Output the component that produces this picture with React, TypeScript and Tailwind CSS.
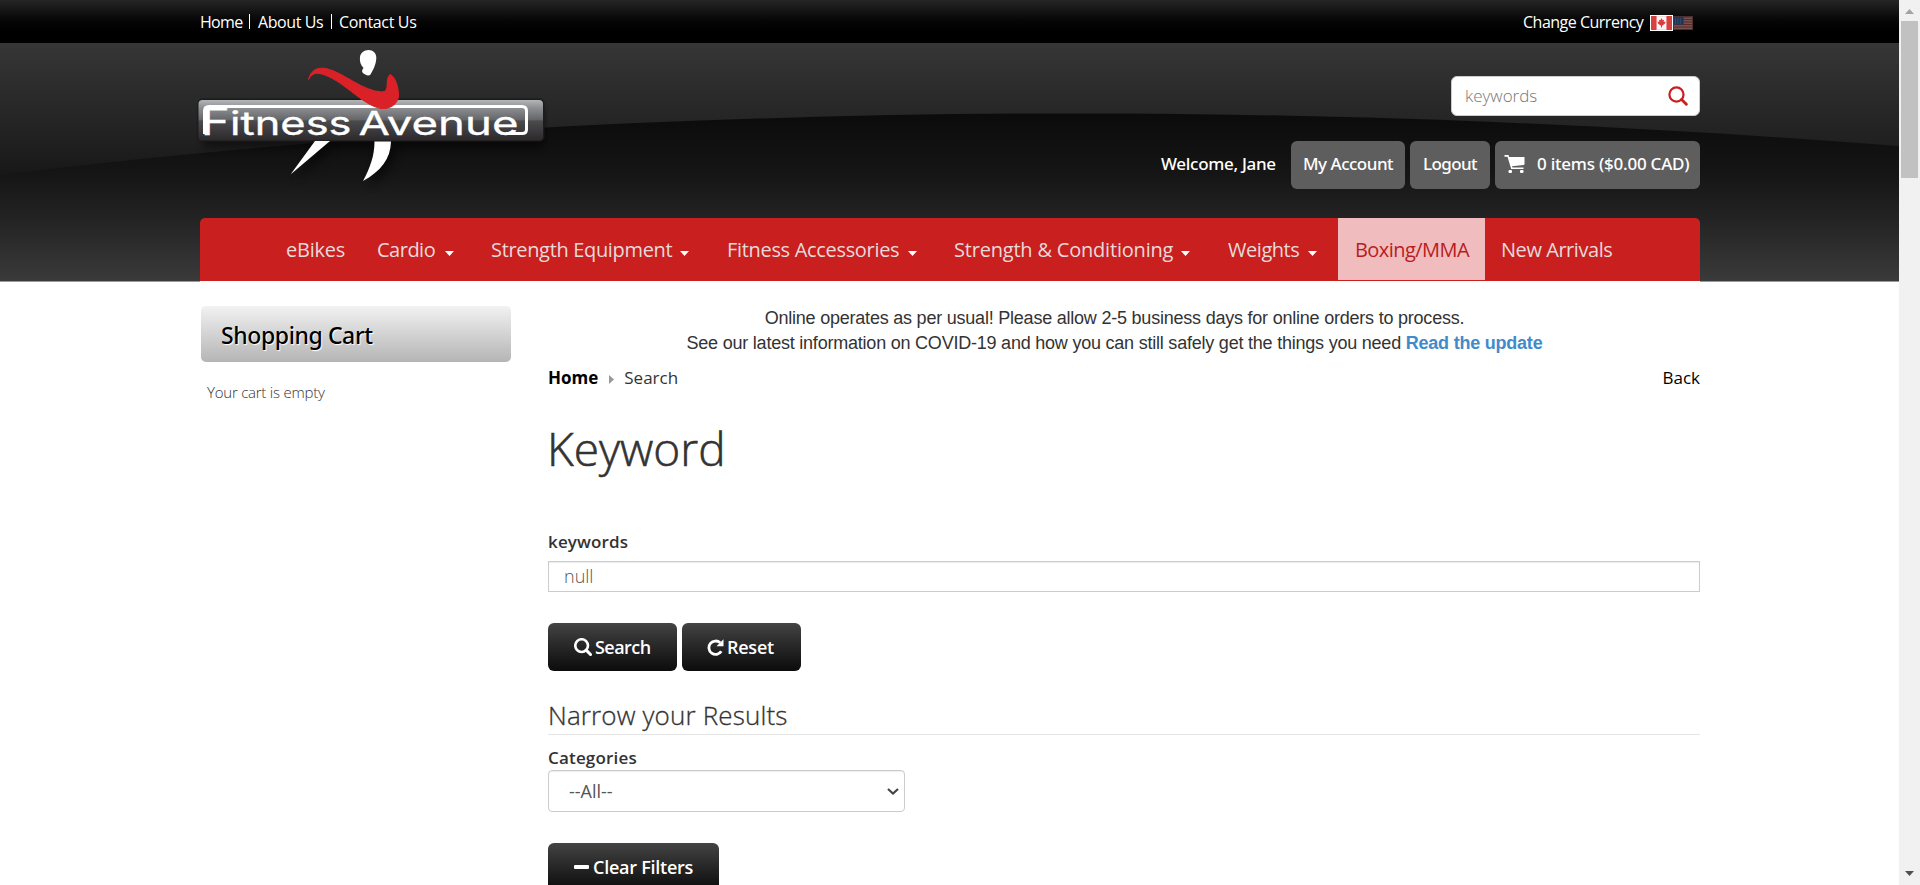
import React from "react";

function Logo() {
  return (
    <svg className="block h-[150px] w-[352px]" viewBox="196 43 352 150" role="img" aria-label="Fitness Avenue">
      <defs>
        <linearGradient id="plate" x1="0" y1="0" x2="0" y2="1">
          <stop offset="0" stopColor="#b4b5b8" />
          <stop offset="0.2" stopColor="#8d8e91" />
          <stop offset="0.48" stopColor="#66676a" />
          <stop offset="0.52" stopColor="#4b4a4c" />
          <stop offset="1" stopColor="#2c292b" />
        </linearGradient>
        <filter id="soft" x="-20%" y="-20%" width="140%" height="150%">
          <feGaussianBlur stdDeviation="4" />
        </filter>
      </defs>
      <rect x="202" y="106" width="342" height="42" rx="6" fill="#000" opacity="0.45" filter="url(#soft)" />
      <path d="M314 143 L330 143 L291 175Z M375 143 L392 143 C390 160 381 171 364 182 C370 170 374 157 375 143Z" fill="#000" opacity="0.5" filter="url(#soft)" transform="translate(4 5)" />
      <rect x="197.500" y="98.500" width="347" height="43" rx="5" fill="#1d1b1c" />
      <rect x="198.500" y="100" width="344.500" height="40.500" rx="4" fill="url(#plate)" />
      <path d="M368.500 50 C373 50 376.500 53 376.300 58 C376 65 373 70 370.500 74.500 C368.500 76.500 365 75 362.500 72.500 C361.500 71 362.500 69 363.500 68 C360.500 65 359.500 61 360 57 C360.500 53 364 50 368.500 50Z" fill="#fff" />
      <path d="M315 141 L330 141 L290.500 174.500Z" fill="#fff" />
      <path d="M374.500 141.500 L391 141.500 C390.500 159 381 171 363 181 C370 168 374.500 156 374.500 141.500Z" fill="#fff" />
      <path d="M204.500 134 V111 Q204.500 106.500 209 106.500 H522 Q526.500 106.500 526.500 111 V129.500 Q526.500 133.500 522 133.500 H506" fill="none" stroke="#fff" strokeWidth="3" />
      <text x="200.500" y="134.500" fill="#fff" stroke="#fff" strokeWidth="0.300" fontFamily="Inter, sans-serif" fontSize="33" textLength="151" lengthAdjust="spacingAndGlyphs">
        <tspan fontSize="38">F</tspan>itness
      </text>
      <text x="358.500" y="134.500" fill="#fff" stroke="#fff" strokeWidth="0.300" fontFamily="Inter, sans-serif" fontSize="33" textLength="160" lengthAdjust="spacingAndGlyphs">Avenue</text>
      <path d="M308.500 79.500 C311 70 317 67 326 68.500 C345 73 362 91 382 92 C391 91 384 81 390 74.500 C395 76 399 88 398.500 96 C398 104 390 109.500 381 108.500 C361 105 343 79 320 73.500 C314 72.500 311 75 308.500 79.500Z" fill="#db2128" stroke="#db2128" strokeWidth="1" />
    </svg>
  );
}

function HeaderBackdrop() {
  return (
    <svg className="absolute inset-0 h-full w-full" viewBox="0 0 1899 238" preserveAspectRatio="none" aria-hidden="true">
      <defs>
        <linearGradient id="upper" x1="0" y1="0" x2="0" y2="1">
          <stop offset="0" stopColor="#363636" />
          <stop offset="0.42" stopColor="#202020" />
          <stop offset="0.56" stopColor="#171717" />
        </linearGradient>
        <linearGradient id="lower" gradientUnits="userSpaceOnUse" x1="0" y1="70" x2="0" y2="238">
          <stop offset="0" stopColor="#0b0b0b" />
          <stop offset="0.36" stopColor="#151515" />
          <stop offset="0.63" stopColor="#232323" />
          <stop offset="1" stopColor="#3a3a3a" />
        </linearGradient>
      </defs>
      <rect width="1899" height="238" fill="url(#upper)" />
      <path d="M0 132 C350 88 750 69 1120 70.500 C1400 72 1650 84 1899 103 V238 H0Z" fill="url(#lower)" />
    </svg>
  );
}

function Flags() {
  return (
    <div className="flex items-center pt-0.5">
      <svg className="h-4 w-[23px]" viewBox="0 0 23 16">
        <rect width="23" height="16" fill="#fff" />
        <rect x="1" y="1" width="21" height="14" fill="#f3dede" />
        <rect x="1" y="1" width="5.500" height="14" fill="#d9413f" />
        <rect x="16.500" y="1" width="5.500" height="14" fill="#d9413f" />
        <rect x="7" y="2" width="9" height="12" fill="#fff" opacity="0.7" />
        <path d="M11.500 3 L12.700 5.200 L14 4.800 L13.700 7 L15.500 6.600 L15 8.500 L12.500 10.500 H12 V12.500 H11 V10.500 H10.500 L8 8.500 L7.500 6.600 L9.300 7 L9 4.800 L10.300 5.200Z" fill="#e0393c" />
      </svg>
      <svg className="h-3.5 w-5" viewBox="0 0 20 14">
        <rect width="20" height="14" fill="#77504f" />
        <path d="M0 1H20M0 3.500H20M0 6H20M0 8.500H20M0 11H20M0 13.500H20" stroke="#5b2929" strokeWidth="1.200" />
        <rect y="1" width="10.500" height="7.500" fill="#1c355c" />
        <path d="M2 3H9M2 5H9M2 7H9" stroke="#5a6d8c" strokeWidth="0.800" strokeDasharray="1 1.400" />
        <rect x="0.500" y="0.500" width="19" height="13" fill="none" stroke="#4c2f2f" strokeWidth="1" />
      </svg>
    </div>
  );
}

function Caret({ className = "" }: { className?: string }) {
  return (
    <svg className={`h-[5px] w-[9px] shrink-0 ${className}`} viewBox="0 0 9 5">
      <path d="M0 0H9L4.500 5Z" fill="#fff" />
    </svg>
  );
}

function SearchGlyph({ className = "", thin = false }: { className?: string; thin?: boolean }) {
  return (
    <svg className={className} viewBox="0 0 17 17" fill="none" stroke="currentColor">
      <circle cx="7.200" cy="7.200" r="6" strokeWidth={thin ? 1.9 : 2.5} />
      <path d="M11.500 11.500L15.600 15.600" strokeWidth={thin ? 2.4 : 2.9} strokeLinecap="round" />
    </svg>
  );
}

const nav = [
  { label: "eBikes", box: "ml-[86px] w-[91px]", track: "tracking-[-0.250px]" },
  { label: "Cardio", box: "w-[114px]", track: "tracking-[-0.500px]", caret: "ml-[10px]" },
  { label: "Strength Equipment", box: "w-[236px]", track: "tracking-[-0.330px]", caret: "ml-[8px]" },
  { label: "Fitness Accessories", box: "w-[227px]", track: "tracking-[-0.320px]", caret: "ml-[9px]" },
  { label: "Strength & Conditioning", box: "w-[274px]", track: "tracking-[-0.200px]", caret: "ml-[8px]" },
  { label: "Weights", box: "w-[110px]", track: "tracking-[-0.450px]", caret: "ml-[9px]" },
];

const pill = "flex h-12 items-center rounded-md bg-[#5e5e5e] pb-[3px]";
const dark = "flex h-12 shrink-0 items-center rounded-md bg-linear-to-b from-[#444] to-[#0c0c0c] pl-[26px] text-[18px] font-semibold text-white";

export default function App() {
  return (
    <div className="flex h-[885px] w-[1920px] overflow-hidden whitespace-nowrap bg-white font-['Open_Sans',sans-serif] text-[#333]">
      <div className="h-full w-[1899px] overflow-hidden">
        <div className="h-[43px] bg-linear-to-b from-[#262626] to-black to-90%">
          <div className="ml-[200px] flex h-full w-[1500px] items-center text-[16px] text-white">
            <span className="w-[49px] tracking-[-0.700px]">Home</span>
            <span className="h-[15px] w-px bg-white" />
            <span className="w-[81px] pl-2 tracking-[-0.400px]">About Us</span>
            <span className="h-[15px] w-px bg-white" />
            <span className="pl-[7px] tracking-[-0.350px]">Contact Us</span>
            <span className="ml-auto w-[127px] tracking-[-0.500px]">Change Currency</span>
            <Flags />
            <span className="w-[7px]" />
          </div>
        </div>

        <header className="relative h-[239px] border-b border-[#999]">
          <HeaderBackdrop />
          <div className="relative ml-[200px] w-[1500px]">
            <div className="flex h-[175px] justify-between">
              <div className="-ml-1">
                <Logo />
              </div>
              <div className="flex flex-col items-end pt-[33px]">
                <div className="flex h-10 w-[249px] items-center justify-between rounded-md border border-[#ccc] bg-white pl-[13px] pr-[11px] text-[17px] font-light text-[#777]">
                  <span>keywords</span>
                  <SearchGlyph thin className="h-5 w-5 text-[#c91f1f]" />
                </div>
                <div className="mt-[25px] flex gap-[5px] font-['Noto_Sans',sans-serif] text-[17px] font-medium text-white">
                  <div className="flex h-12 w-[125px] items-center pb-[3px] tracking-[-0.300px]">Welcome, Jane</div>
                  <div className={`${pill} w-[114px] pl-3 tracking-[-0.500px]`}>My Account</div>
                  <div className={`${pill} w-20 pl-[13px] tracking-[-0.600px]`}>Logout</div>
                  <div className={`${pill} w-[205px] pl-[9px] tracking-[-0.230px]`}>
                    <svg className="h-[18px] w-[21px]" viewBox="0 0 21 18" fill="#fff">
                      <path d="M0.500 0 H4.500 L5.200 2 H20.500 V9 Q20.500 9.800 19.600 10 L8 11.300 L8.500 12.600 H19.500 V14 H7.200 L3.500 1.800 H0.500Z" />
                      <rect x="4.500" y="15" width="3.500" height="3" rx="1" />
                      <rect x="16" y="15" width="3.500" height="3" rx="1" />
                    </svg>
                    <span className="pl-3">0 items ($0.00 CAD)</span>
                  </div>
                </div>
              </div>
            </div>
            <nav className="flex h-[63px] rounded-t-[5px] bg-[#c91f1f] text-[20px] text-[#e6dada]">
              {nav.map((n) => (
                <div key={n.label} className={`flex items-center ${n.box}`}>
                  <span className={n.track}>{n.label}</span>
                  {n.caret && <Caret className={`mt-[7px] ${n.caret}`} />}
                </div>
              ))}
              <div className="flex h-[62px] w-[147px] items-center bg-[#f0bcbd] pl-[17px] pt-px tracking-[-0.550px] text-[#b81c1f]">Boxing/MMA</div>
              <div className="flex items-center pl-4 tracking-[-0.450px]">New Arrivals</div>
            </nav>
            <div className="h-px bg-white" />
          </div>
        </header>

        <div className="ml-[201px] flex w-[1499px]">
          <aside className="w-[347px] pt-6">
            <div className="flex h-14 w-[310px] items-center rounded-[5px] bg-linear-to-b from-[#f2f2f2] to-[#b5b5b5] pl-5 pt-0.5 font-['Noto_Sans',sans-serif] text-[23px] font-medium tracking-[-0.400px] text-black [text-shadow:1px_1px_1px_#fff]">
              Shopping Cart
            </div>
            <p className="mt-[18px] pl-1.5 text-[15px] font-light leading-6 tracking-[-0.230px]">Your cart is empty</p>
          </aside>

          <main className="w-[1152px] pt-6">
            <div className="pr-[19px] text-center font-['Liberation_Sans',sans-serif] text-[18px] leading-[25px] tracking-[-0.220px]">
              <p>Online operates as per usual! Please allow 2-5 business days for online orders to process.</p>
              <p>
                See our latest information on COVID-19 and how you can still safely get the things you need{" "}
                <b className="text-[#428bca]">Read the update</b>
              </p>
            </div>
            <div className="mt-[9px] flex h-[25px] items-center text-[17px]">
              <span className="font-bold text-black">Home</span>
              <svg className="ml-[11px] mt-1 h-[9px] w-[5px]" viewBox="0 0 5 9">
                <path d="M0 0L5 4.500L0 9Z" fill="#999" />
              </svg>
              <span className="ml-2.5">Search</span>
              <span className="ml-auto text-black">Back</span>
            </div>
            <h1 className="-ml-px mt-[33px] text-[46px] font-light leading-[50px] [-webkit-text-stroke:0.6px_#333]">Keyword</h1>
            <div className="mt-[57px] text-[17px] font-semibold leading-6 tracking-[0.150px]">keywords</div>
            <div className="mt-[7px] flex h-[31px] items-center border border-[#ccc] pl-[15px] text-[18px] font-light text-[#555] shadow-[inset_0_1px_1px_rgba(0,0,0,0.075)]">
              null
            </div>
            <div className="mt-[31px] flex gap-[5px]">
              <div className={`${dark} w-[129px] tracking-[-0.550px]`}>
                <SearchGlyph className="mr-[3px] h-[18px] w-[18px]" />
                Search
              </div>
              <div className={`${dark} w-[119px] tracking-[-0.250px]`}>
                <svg className="-ml-px mr-[3px] h-[17px] w-[17px]" viewBox="0 0 17 17">
                  <path d="M14.300 12.300 A6.700 6.700 0 1 1 13.200 3.800" fill="none" stroke="#fff" strokeWidth="2.800" />
                  <path d="M16.500 0.300 V7.300 H9.500Z" fill="#fff" />
                </svg>
                Reset
              </div>
            </div>
            <h2 className="mt-[27px] border-b border-[#e5e5e5] pb-0.5 text-[26px] font-light leading-[34px] tracking-[0.140px] [-webkit-text-stroke:0.3px_#333]">Narrow your Results</h2>
            <div className="mt-[11px] text-[17px] font-semibold leading-6 tracking-[0.180px]">Categories</div>
            <div className="flex h-[42px] w-[357px] items-center justify-between rounded border border-[#ccc] pl-5 pr-[5px] text-[18px] text-[#555] shadow-[inset_0_1px_1px_rgba(0,0,0,0.075)]">
              <span>--All--</span>
              <svg className="h-[7px] w-3" viewBox="0 0 12 7">
                <path d="M1 1L6 5.500L11 1" fill="none" stroke="#444" strokeWidth="2.200" />
              </svg>
            </div>
            <div className="mt-[31px] flex">
              <div className={`${dark} w-[171px] tracking-[-0.250px]`}>
                <span className="mr-1 h-1 w-[15px] rounded-[1px] bg-white" />
                Clear Filters
              </div>
            </div>
          </main>
        </div>
      </div>

      <div className="flex w-[21px] flex-col items-center bg-[#f1f1f1]">
        <svg className="mt-[9px] h-[5px] w-[9px]" viewBox="0 0 9 5">
          <path d="M0 5H9L4.500 0Z" fill="#a3a3a3" />
        </svg>
        <div className="mt-[7px] h-[157px] w-[17px] bg-[#c1c1c1]" />
        <svg className="mb-[9px] mt-auto h-[5px] w-[9px]" viewBox="0 0 9 5">
          <path d="M0 0H9L4.500 5Z" fill="#505050" />
        </svg>
      </div>
    </div>
  );
}
